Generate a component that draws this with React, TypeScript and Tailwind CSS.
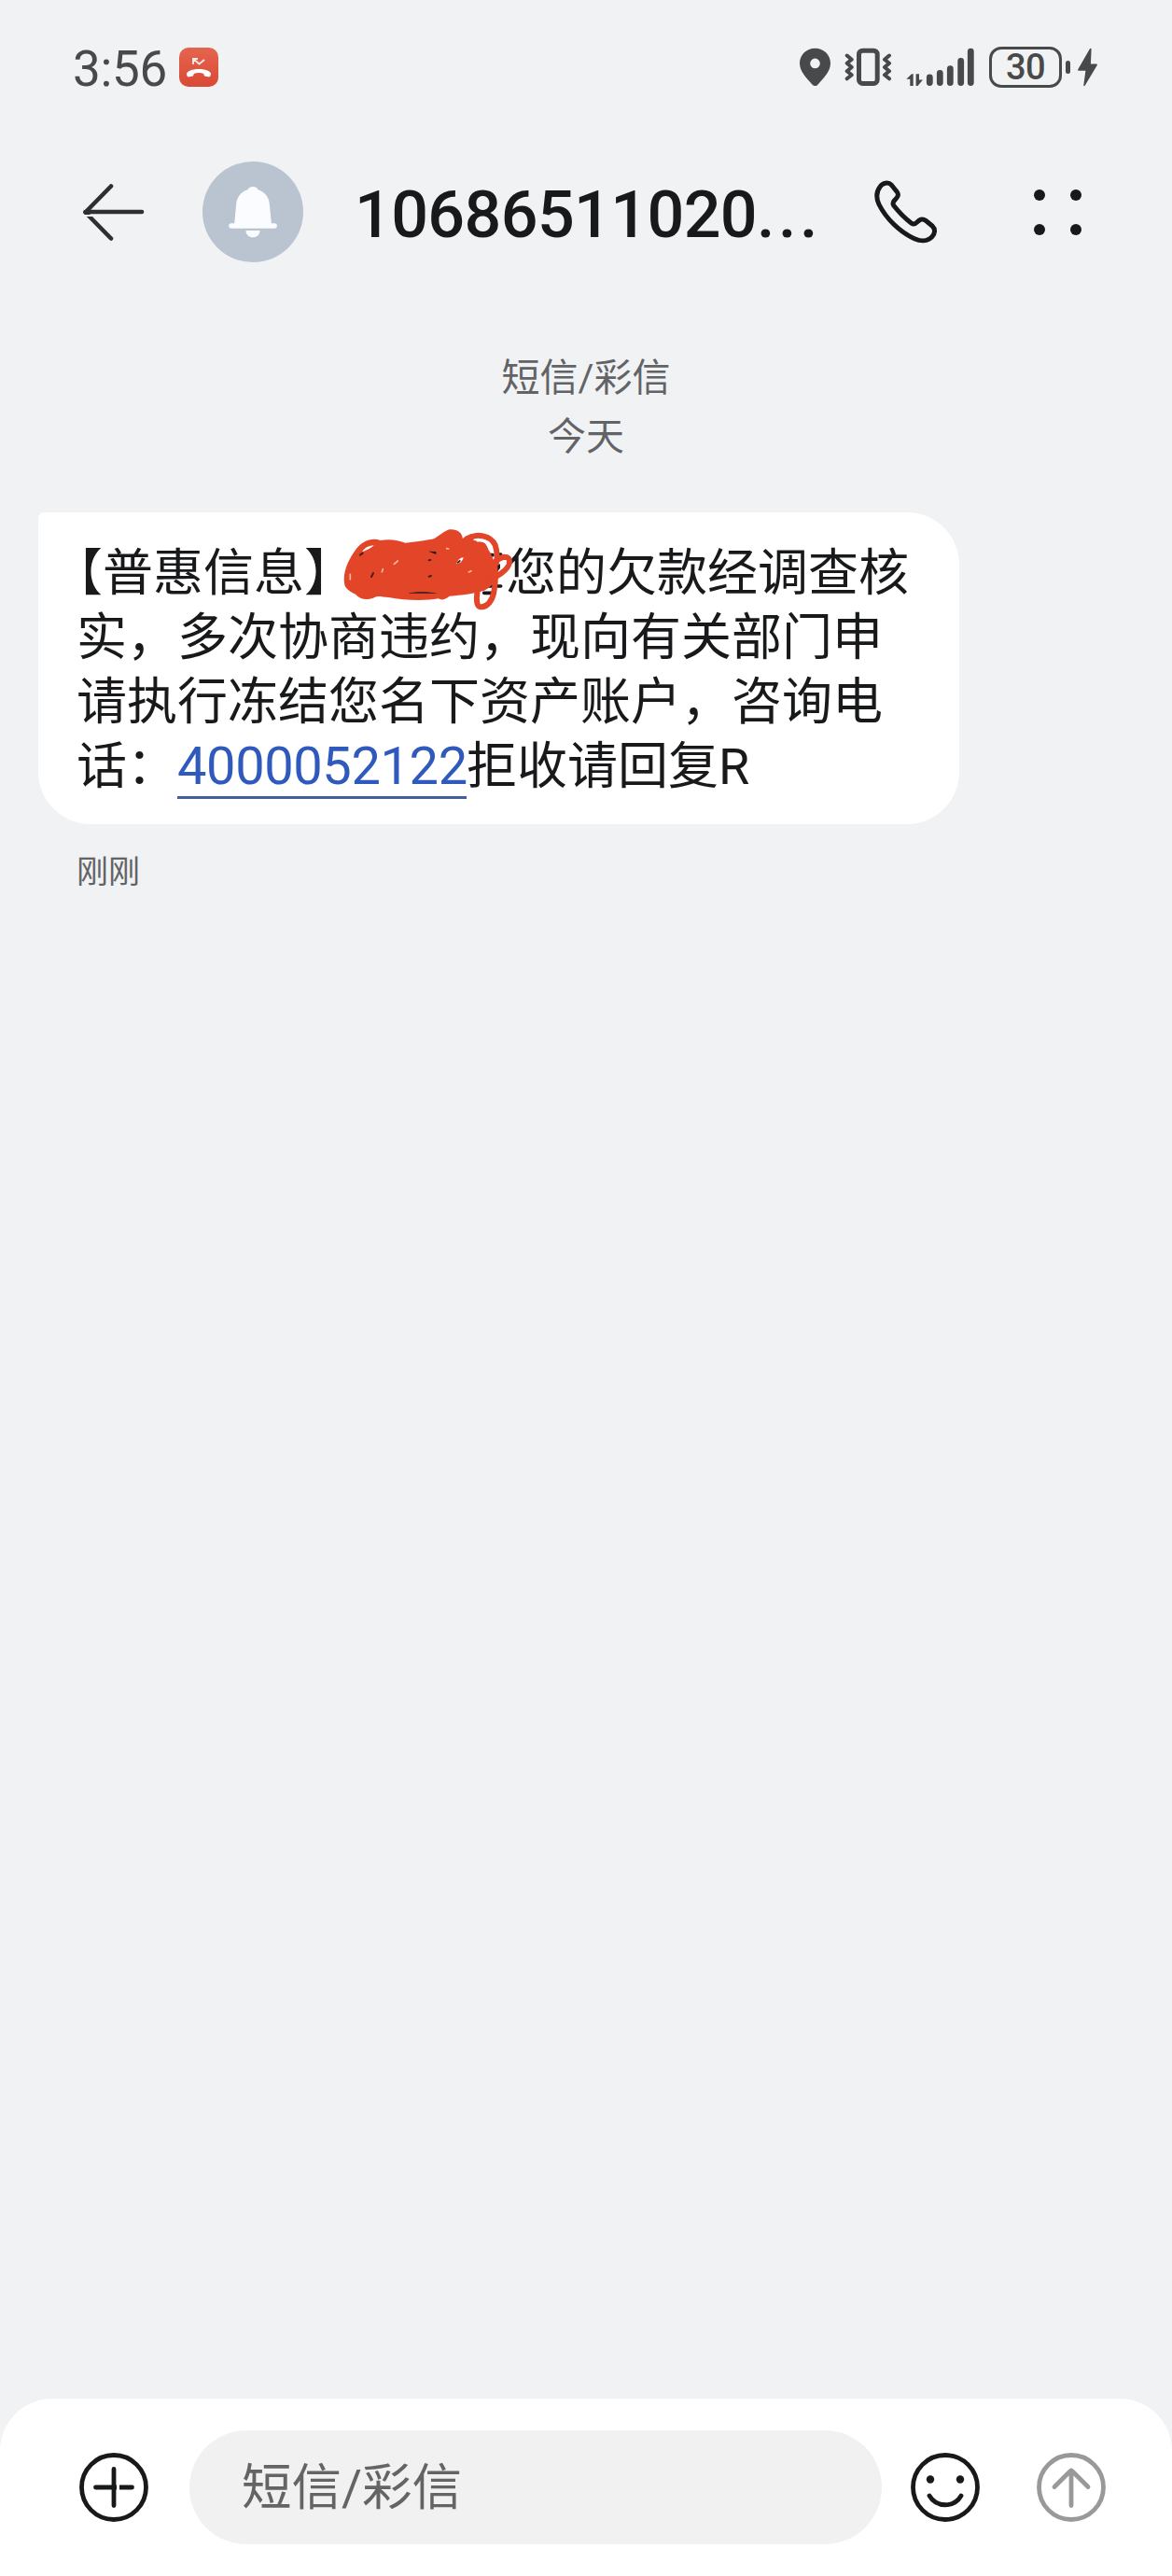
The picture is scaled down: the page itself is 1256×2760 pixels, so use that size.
import type { ReactNode } from 'react';

const CJK = "font-['Roboto','Noto_Sans_CJK_SC',sans-serif]";

export default function App() {
  return (
    <div
      className={`flex h-[2760px] w-[1256px] flex-col overflow-hidden bg-[#f1f2f4] text-[#18191b] ${CJK}`}
    >
      <StatusBar />
      <Header />
      <main className="flex flex-1 flex-col items-start pt-[64px]">
        <div className="w-full text-center text-[41px] leading-[63px] text-[#626366]">
          <p>短信/彩信</p>
          <p>今天</p>
        </div>
        <MessageBubble />
        <time className="mt-[26px] ml-[82px] text-[34px] leading-[50px] text-[#626366]">刚刚</time>
      </main>
      <Composer />
    </div>
  );
}

function StatusBar() {
  return (
    <div className="flex h-[144px] shrink-0 items-center pr-[80px] pl-[78px] text-[#48494b]">
      <span className="w-[114px] pt-[3px] text-[53px] leading-[62px] font-[450] tracking-[-0.300px]">3:56</span>
      <MissedCallBadge />
      <div className="ml-auto flex items-center">
        <svg width="33" height="48" viewBox="0 0 33 48" fill="currentColor">
          <path
            fillRule="evenodd"
            d="M16.5 3.7C7.4 3.7 0 10.6 0 19.8c0 8.2 6.300 14.700 13.400 22.700 2 2.100 4.200 2.100 6.200 0C26.700 34.500 33 28 33 19.800 33 10.600 25.600 3.700 16.500 3.700Zm0 10.900a5.300 5.300 0 1 1 0 10.600 5.300 5.300 0 0 1 0-10.600Z"
          />
        </svg>
        <svg
          className="ml-[15px]"
          width="51"
          height="48"
          viewBox="0 0 51 48"
          fill="none"
          stroke="currentColor"
          strokeLinecap="round"
          strokeLinejoin="round"
        >
          <rect x="15.500" y="6.200" width="19.700" height="35.300" rx="4" strokeWidth="5" />
          <path
            strokeWidth="4"
            d="m2.700 11.500 5 4.200-5 4 5 4.300-5 4.300 5 4-5 4M48 11.500l-5 4.200 5 4-5 4.300 5 4.300-5 4 5 4"
          />
        </svg>
        <svg
          className="ml-[15px]"
          width="73"
          height="48"
          viewBox="0 0 73 48"
          stroke="currentColor"
          strokeWidth="6.800"
          strokeLinecap="round"
        >
          <path d="M25.300 35v5.600M36.300 30.500v10.100M47.300 25.600v15M58.700 17.500v23.100M69.300 7.100v33.500" />
          <path
            fill="currentColor"
            stroke="none"
            d="M.300 36.800 6 31.300h1.700V44H4.300v-7.200zM10.600 31.300H14v6.200h4L12.500 44h-1.900z"
          />
        </svg>
        <div className="ml-[16px] flex h-[44px] w-[78px] items-center justify-center rounded-[13px] border-[3.500px] border-current text-[38px] leading-[44px] font-medium tracking-[-0.5px]">
          30
        </div>
        <div className="ml-[4px] h-[14px] w-[5px] rounded-full bg-current" />
        <svg className="ml-[8px]" width="21" height="48" viewBox="0 0 21 48" fill="currentColor">
          <path d="M12.800 4.500.300 26.200c-.500.900-.100 1.500.800 1.500h7.300L6.300 43.200c-.100 1.200.900 1.300 1.500.400L20.700 22c.500-.900.100-1.600-.800-1.600h-6l.700-15.500c0-1.200-1.200-1.400-1.800-.400Z" />
        </svg>
      </div>
    </div>
  );
}

function MissedCallBadge() {
  return (
    <svg width="42" height="42" viewBox="0 0 42 42" fill="none">
      <defs>
        <linearGradient id="badge" x1="0" y1="0" x2="0" y2="1">
          <stop stopColor="#e5644f" />
          <stop offset="1" stopColor="#d94a35" />
        </linearGradient>
      </defs>
      <rect width="42" height="42" rx="10" fill="url(#badge)" />
      <path d="m15 12 6.500 5.500L27 13M15 18v-6h5" stroke="#fbe9e4" strokeWidth="1.900" />
      <path
        d="M8.200 29.500c-.800-1.800.300-3.500 2.800-4.600 5.800-2.600 14.400-2.600 20.200 0 2.500 1.100 3.400 2.800 2.600 4.600-.500 1.700-1.300 2-3 1.700l-2.600-.500c-1.500-.300-1.800-1-1.900-2.700-3-1.200-7.600-1.200-10.600 0-.100 1.700-.500 2.400-2 2.700l-2.500.500c-1.600.300-2.500 0-3-1.700Z"
        fill="#fff"
      />
    </svg>
  );
}

function Header() {
  return (
    <header className="flex h-[166px] shrink-0 items-center pl-[88px]">
      <svg width="68" height="68" viewBox="0 0 68 68" fill="none" strokeLinecap="round" strokeLinejoin="round">
        <g stroke="#2d2f30" strokeWidth="4.600">
          <path d="m31 62.500-27.500-28L31 6.500" />
          <path d="M3.500 34H64" />
        </g>
        <path d="M2 38h12" stroke="#f1f2f4" strokeWidth="2" strokeLinecap="butt" />
      </svg>
      <div className="ml-[61px] flex h-[108px] w-[108px] items-center justify-center rounded-full bg-[#bac4d1]">
        <svg width="52" height="56" viewBox="0 0 52 56" fill="#fafcff">
          <path d="M26 1c2.600 0 4.600 1.200 5.500 3.200 7.600 2.500 11.800 8.300 12.300 15.200l2.100 20.800h3.200a2.800 2.800 0 0 1 0 5.600H3a2.800 2.800 0 0 1 0-5.600h3.200l2-20.800C8.700 12.500 12.900 6.700 20.500 4.200 21.400 2.200 23.400 1 26 1Z" />
          <path d="M18.500 48h15c0 4.500-3.200 7.300-7.500 7.300s-7.500-2.800-7.500-7.300Z" />
        </svg>
      </div>
      <h1 className="ml-[55px] w-[557px] pt-[5px] text-[70px] leading-[82px] font-medium tracking-[-0.600px] whitespace-nowrap">
        10686511020<span className="tracking-[3.500px]">...</span>
      </h1>
      <svg
        width="68"
        height="68"
        viewBox="0 0 68 68"
        fill="none"
        stroke="currentColor"
        strokeWidth="5"
        strokeLinejoin="round"
      >
        <path d="M6.500 6.500C9 3 15 1.700 18.200 5l6 7.500c2.800 3.500.300 6-2.700 9.300-2 2.200-2 3.700-.5 5.700C26.500 34.500 33 41 39.500 46c2 1.500 3.700 1.500 5.700-.5 3.300-3 6-5 9.800-2.200l7.300 6c3.500 3.200 2.500 8.200-.3 11.200-5 5.500-12.500 5.300-19 2.200C27 55.500 12.500 41 5 26 1.700 19 2.200 12 6.500 6.500Z" />
      </svg>
      <div className="ml-[103px] grid grid-cols-2 gap-x-[27px] gap-y-[25px]">
        {[0, 1, 2, 3].map((dot) => (
          <span key={dot} className="size-[12px] rounded-full bg-current" />
        ))}
      </div>
    </header>
  );
}

function MessageBubble() {
  return (
    <div className="relative mt-[49px] ml-[41px] h-[334px] w-[987px] rounded-[56px] rounded-tl-[6px] bg-white pt-[31px] pl-[41px] text-[54px] leading-[69px] whitespace-nowrap [text-spacing-trim:space-all]">
      <p className="-ml-[26px]">
        【普惠信息】
        <span className="inline-block w-[162px]" />
        您的欠款经调查核
      </p>
      <p>实，多次协商违约，现向有关部门申</p>
      <p>请执行冻结您名下资产账户，咨询电</p>
      <p>
        话：
        <a
          href="tel:4000052122"
          className="relative inline-block h-[69px] w-[310px] align-top text-[56px] tracking-[-0.400px] text-[#3059bd] after:absolute after:bottom-0 after:left-0 after:h-[3px] after:w-full after:bg-[#3f5f9f]"
        >
          4000052122
        </a>
        拒收请回复R
      </p>
      <Scribble />
    </div>
  );
}

// Marker strokes that hide the sender name
function Scribble() {
  return (
    <svg
      className="absolute top-px left-[299px]"
      width="240"
      height="120"
      viewBox="0 0 720 360"
      fill="none"
      strokeLinecap="round"
      strokeLinejoin="round"
    >
      <path d="M556 134h8M584 132h6M540 234h50M536 256h24" stroke="#18191b" strokeWidth="11" />
      <path
        d="M88 230C80 190 100 150 125 115c20-26 50-38 78-28 28-5 55-2 80 8 35-2 62-8 92-13 20-12 33-25 50-30 22-3 42 10 42 28 18-8 38-6 48 12 22-6 30 8 38 28 14 26 20 50 22 66 0 30-12 50-38 62-38 12-82 16-112 18-16 12-24 14-36 8-42 8-110 6-160-4-24-2-34-6-44 0-26 12-48 6-62-10-16-8-30-16-35-30Z"
        fill="#e34529"
      />
      <g stroke="#e34529" strokeWidth="18">
        <path d="M480 82c34-20 78-10 92 20 12 34 2 66-2 96M540 190c14-22 42-48 62-50 24 0 18 26 2 42-16 16-38 28-58 28" />
        <path d="M520 226c-8 28-12 70 2 74 24 6 42-22 46-48 6-30 6-40 4-66" />
      </g>
      <path d="M144 124c8-12 20-20 38-21-10 10-22 14-38 21ZM500 84c28-8 50 6 54 42-6-18-12-34-24-34-12-2-20-2-30-8ZM448 162c2-10 12-20 22-20-2 10-12 22-22 20ZM586 182c4-12 14-22 24-24-4 10-12 20-24 24Z" fill="#fff" />
      <path d="m247 163 12-10M208 188l3-9M487 189l8-4M106 212v-16M416 113l6 1" stroke="#f5bb9d" strokeWidth="5" />
      <path d="m138 134 8-6M174 204l6-12M359 151l5-1M359 203l7-2M452 158l6-5" stroke="#46201b" strokeWidth="6" />
      <path d="m358 122 24 1v9ZM292 257c20-6 68-6 94 0ZM580 186v-18l8-6v14Z" fill="#231b1b" />
    </svg>
  );
}

function Composer() {
  return (
    <footer className="flex h-[190px] shrink-0 items-center rounded-t-[56px] bg-white pr-[71px] pl-[85px]">
      <RoundIcon>
        <path d="M37 17.500v39M17.500 37h39" />
        <path d="M40 37h3" stroke="#fff" strokeWidth="6" strokeLinecap="butt" />
      </RoundIcon>
      <div className="ml-[44px] flex h-[122px] w-[742px] items-center rounded-full bg-[#f1f1f2] pt-[3px] pl-[56px] text-[53.500px] text-[#646464]">
        短信/彩信
      </div>
      <div className="ml-[31px]">
        <RoundIcon>
          <circle cx="21" cy="28.500" r="4.200" fill="currentColor" stroke="none" />
          <circle cx="53" cy="28.500" r="4.200" fill="currentColor" stroke="none" />
          <path d="M20 46c7.500 13 26.500 13 34 0" />
        </RoundIcon>
      </div>
      <div className="ml-auto text-[#999]">
        <RoundIcon>
          <path d="M37 56.500V19M19 36.500 35.300 20.200q1.700-1.500 3.400 0L55 36.500" />
        </RoundIcon>
      </div>
    </footer>
  );
}

function RoundIcon({ children }: { children: ReactNode }) {
  return (
    <svg
      className="block"
      width="74"
      height="74"
      viewBox="0 0 74 74"
      fill="none"
      stroke="currentColor"
      strokeWidth="4.800"
      strokeLinecap="round"
      strokeLinejoin="round"
    >
      <circle cx="37" cy="37" r="34.500" />
      {children}
    </svg>
  );
}
